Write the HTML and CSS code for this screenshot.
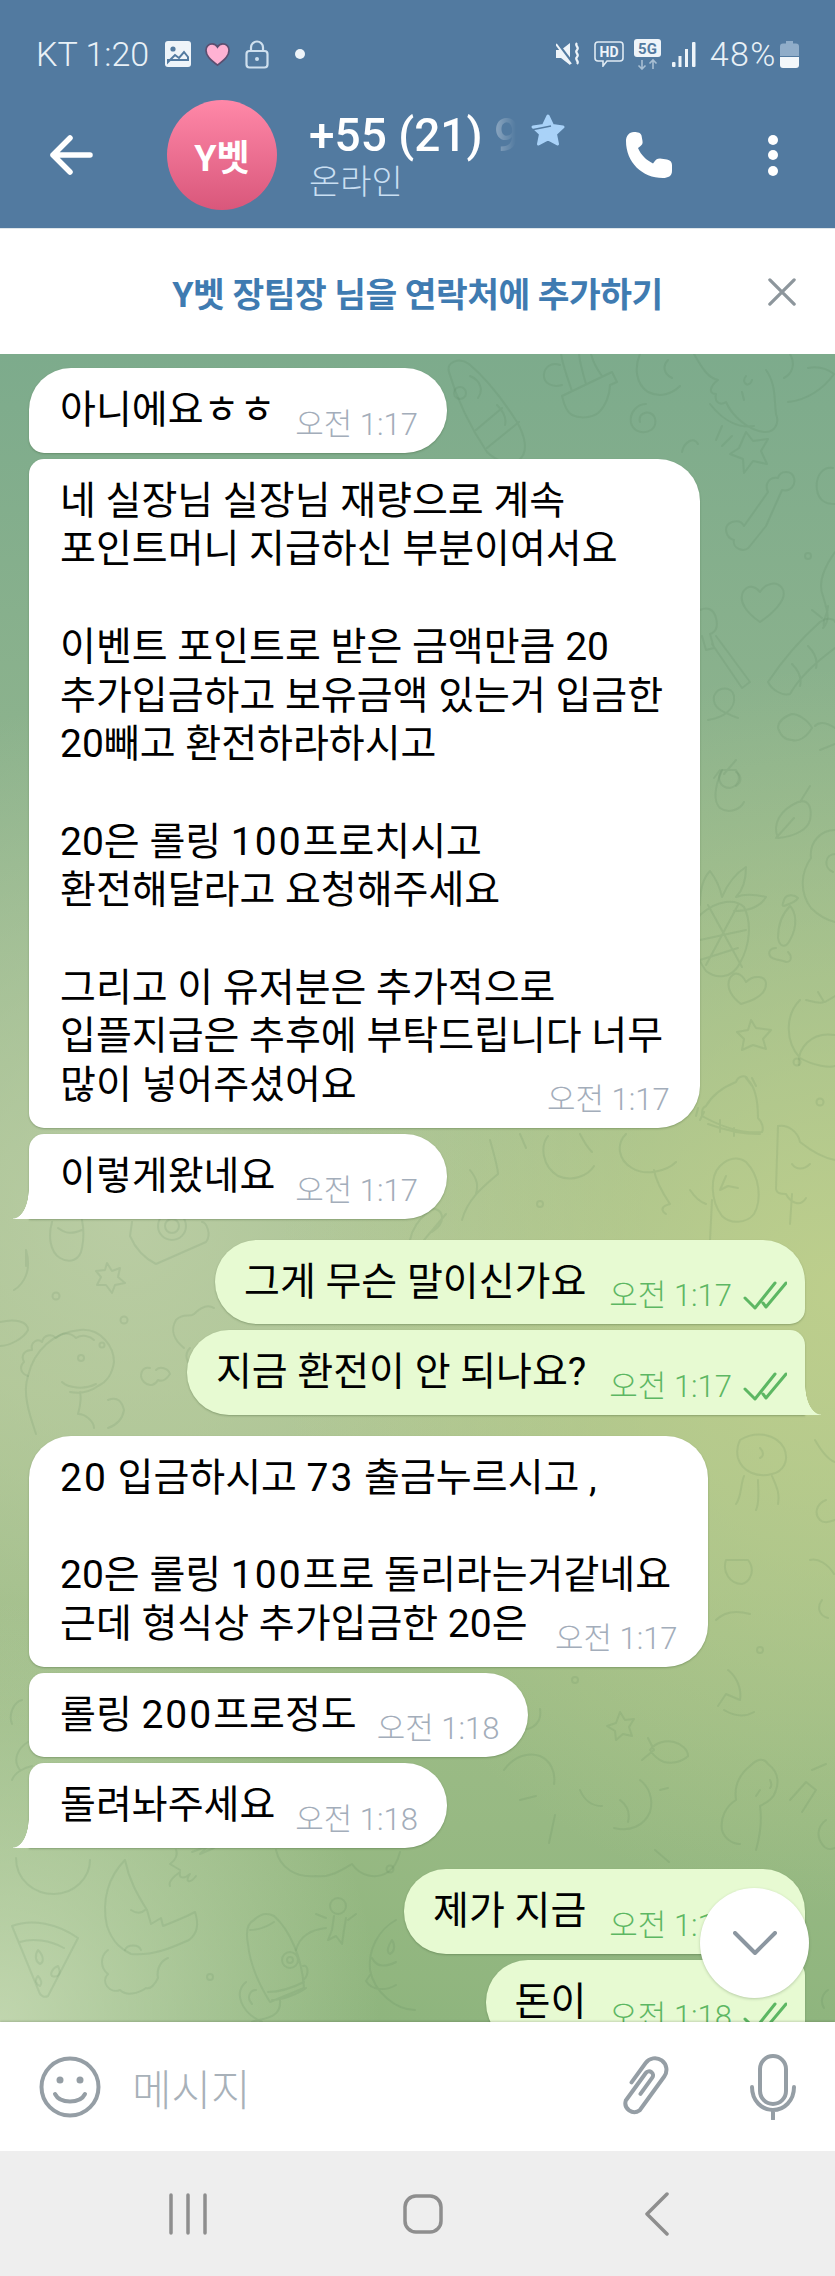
FILE: index.html
```html
<!DOCTYPE html>
<html lang="ko">

<head>
    <meta charset="UTF-8">
    <title>Chat</title>
    <link rel="stylesheet" href="styles.css">
</head>

<body>
    <div class="phone">

        <header class="topbar">
            <div class="status">
                <div class="status-side">
                    <span class="clock">KT 1:20</span>
                    <svg class="st-img" viewBox="0 0 26 26"><rect x="0" y="0" width="26" height="26" rx="3" fill="#eef4f9"/><circle cx="8" cy="8" r="2.6" fill="#527aa0"/><path d="M3 21l7-7 4 3 5-6 4 5v3H3z" fill="none" stroke="#527aa0" stroke-width="2"/></svg>
                    <svg class="st-heart" viewBox="0 0 28 26"><path d="M14 24C6 18 2 14 2 8.500 2 4.500 5 2 8.500 2c2.500 0 4.300 1.200 5.500 3.200C15.200 3.200 17 2 19.500 2 23 2 26 4.500 26 8.500 26 14 22 18 14 24z" fill="#ffb2d3" stroke="#5b4f70" stroke-width="1.800"/></svg>
                    <svg class="st-lock" viewBox="0 0 24 29"><rect x="1.500" y="11" width="21" height="16.500" rx="3" fill="none" stroke="#cfe0ee" stroke-width="2.200"/><path d="M6 11V7.500a6 6 0 0 1 12 0V11" fill="none" stroke="#cfe0ee" stroke-width="2.200"/><circle cx="12" cy="19" r="2" fill="#cfe0ee"/></svg>
                    <span class="st-dot"></span>
                </div>
                <div class="status-side right">
                    <svg class="st-mute" viewBox="0 0 26 24"><path d="M0 8h5l9-7v22l-9-7H0z" fill="#eef4f9"/><path d="M1 1l16 21" stroke="#527aa0" stroke-width="3"/><path d="M0 2l15 20" stroke="#eef4f9" stroke-width="2"/><path d="M21 1c-3 3 3 4 0 7s3 4 0 7 3 4 0 7" fill="none" stroke="#eef4f9" stroke-width="2.200"/></svg>
                    <svg class="st-hd" viewBox="0 0 30 26"><path d="M4 1h22a3 3 0 0 1 3 3v13a3 3 0 0 1-3 3H13l-4 5v-5H4a3 3 0 0 1-3-3V4a3 3 0 0 1 3-3z" fill="none" stroke="#dfeaf3" stroke-width="1.600"/><text x="15" y="16" class="st-hd-text">HD</text></svg>
                    <svg class="st-5g" viewBox="0 0 27 31"><rect x="0" y="0" width="27" height="18" rx="3" fill="#eef4f9"/><text x="13.500" y="15" class="st-5g-text">5G</text><path d="M8 21v9M4.500 26.500L8 30l3.500-3.500" fill="none" stroke="#a8bfd3" stroke-width="1.600"/><path d="M19 30v-9M15.500 24.500L19 21l3.500 3.500" fill="none" stroke="#a8bfd3" stroke-width="1.600"/></svg>
                    <svg class="st-signal" viewBox="0 0 24 25"><rect x="0" y="20" width="3.500" height="5" rx="1" fill="#eef4f9"/><rect x="6.500" y="14" width="3" height="11" fill="#eef4f9"/><rect x="13" y="7" width="3" height="18" fill="#eef4f9"/><rect x="20" y="0" width="3.500" height="25" rx="1" fill="#eef4f9"/></svg>
                    <span class="battery-text">48%</span>
                    <svg class="st-battery" viewBox="0 0 19 27"><path d="M6 0h7v2.500h3a3 3 0 0 1 3 3V15H0V5.500a3 3 0 0 1 3-3h3z" fill="#90adc9"/><path d="M0 16h19v8a3 3 0 0 1-3 3H3a3 3 0 0 1-3-3z" fill="#f3f7fa"/></svg>
                </div>
            </div>
            <div class="toolbar">
                <svg class="back" viewBox="0 0 44 42"><path d="M4 21h37M21 4L4 21l17 17" fill="none" stroke="#fff" stroke-width="5.500" stroke-linecap="round" stroke-linejoin="round"/></svg>
                <div class="avatar">Y벳</div>
                <div class="peer">
                    <div class="peer-name">
                        <span class="peer-number">+55 (21) 9</span>
                        <svg class="peer-star" viewBox="0 0 36 34"><path d="M18 3l4.500 9.500 10.500 1.500-7.500 7 2 10L18 26l-9.500 5 2-10L3 14l10.500-1.500z" fill="#a9d2f8" stroke="#a9d2f8" stroke-width="3" stroke-linejoin="round"/><path d="M1 17l20-4" stroke="#527aa0" stroke-width="1.500"/></svg>
                    </div>
                    <div class="peer-state">온라인</div>
                </div>
                <svg class="call" viewBox="0 0 48 48"><path d="M9 1C4 1 1 5 1 10c0 21 16 37 37 37 5 0 9-2 9-7v-6c0-3-2-5-5-5.500l-7-1c-3 0-4 1-5.500 3l-1.500 2C21 29 16 24 13 17l2-1.500c2-1.500 3-3 2.500-5.500l-1-5.500C16 2 13 1 9 1z" fill="#fff"/></svg>
                <div class="kebab"><span></span><span></span><span></span></div>
            </div>
        </header>

        <div class="add-contact">
            <span class="add-contact-text">Y벳 장팀장 님을 연락처에 추가하기</span>
            <svg class="add-contact-close" viewBox="0 0 30 30"><path d="M2 2l26 26M28 2L2 28" stroke="#8d969c" stroke-width="3.500" stroke-linecap="round"/></svg>
        </div>

        <main class="chat">
            <svg class="doodles" viewBox="0 354 835 1668">
                <!-- top right -->
                <path d="M449 372c-3-10 10-15 20-8 18 15 34 36 48 58 8 14 12 30 2 38-10 6-24 0-32-8-16-24-30-52-38-80zM487 448l32-26M476 430l26-22M470 376c10 4 14 14 8 22M497 405c6 6 10 12 8 20"/>
                <circle cx="460" cy="393" r="6"/>
                <path d="M562 396l50-24 5 10-7 3c0 10-5 22-12 28-8 6-20 5-26 2-4-2-7-6-10-19zM572 391c-5-14-10-28-11-38M602 376c-6-8-10-16-12-26M586 384c-3-10-6-20-7-30M560 365c-9-3-15 2-16 9-1 9 8 14 18 11"/>
                <path d="M640 422c-2-7 5-11 10-9 7 3 7 13 1 17-8 5-18 1-20-7-2-10 6-19 15-19"/>
                <path d="M640 354c-6 14-4 30 8 38 12 6 24 2 32-6M672 378c-8-4-10-12-4-18M694 354c8 14 14 24 24 26-8 6-10 14-2 14-2 8 4 12 10 8 6 14 24 30 40 30 8 0 14-8 10-18-2-16 0-30-10-44M710 404c14 18 30 24 44 22M742 392l2 8M746 376c-6 8 4 12 6 4M790 354c6 10 2 20-6 24M788 402c20-2 36-14 46-28-8-6-16-8-26-6"/>
                <path d="M739 448l7-16 7 9 15-2-7 12 6 13-14-3-9 12-1-14-13-5z"/>
                <path d="M682 452c2-10 12-16 16-8M716 440l6-14M722 446l10-10"/>
                <path d="M766 526l-16 20c-6 8-18 2-16-6-8-2-12-14-2-18 6-2 10 0 12 4l24-34c-4-8 2-16 10-14 2-8 14-8 16 0 2 8-4 14-12 12z"/>
                <path d="M833 468c-10-2-18 8-16 22 2 12 10 14 18 14"/>
                <circle cx="808" cy="556" r="3"/>
                <path d="M760 622c-12-8-22-20-17-30 5-8 12-6 17 0 5-8 16-12 22-4 6 8-4 22-22 34z"/>
                <path d="M835 552c-10 14-18 30-12 44 4 14 8 24 0 32M828 606c0 10-6 12-4 20M812 610l10 8"/>
                <path d="M700 610c8-4 14 0 16 8s0 14-6 16l4 14-8 2-4-14M716 636l34 46-8 6-30-44"/>
                <path d="M768 682c16-24 34-44 52-60 8-6 15-2 15 0M768 682c4 8 14 14 22 12 10-18 26-32 45-46M792 664c6 6 10 14 8 22M808 646c6 6 10 14 8 22"/>
                <path d="M708 720c14-2 28-10 26-24-2-10-16-10-20 0-2 12 8 16 24 22"/>
                <path d="M778 728c0-8 8-12 14-14 6 0 16 6 20 14-6 10-14 14-20 12-8 0-12-6-14-12zM815 726c6-6 14-2 20 2M820 750l15-6"/>
                <path d="M722 770c-6 8-2 18 8 18 8-2 12-10 6-18zM736 760l-12 14"/>
                <!-- right column -->
                <path d="M722 770c-6 14-10 30-2 38 8 6 20 2 24-6M720 770l-6 8M736 786c6-4 6-10 0-14"/>
                <path d="M778 838c-6-14 2-28 20-36 12-4 14 8 12 18-2 8-12 16-32 18zM776 838l18-20M800 802l10-16"/>
                <path d="M700 915c-10 16-6 40 6 56 10 8 26 8 34-8 10-18 12-40 4-56-8-8-26-8-44 8zM700 905c0-14 2-26 10-34 6 8 10 16 12 26 6-14 14-24 24-30 0 10-2 22-10 30 10-4 22-2 30 0-6 10-18 14-32 14M700 940l46-10M708 905l34 62M738 905l-32 60M700 960l38-12"/>
                <path d="M784 906c6-2 12-4 14-8-4-4-12-4-14 2s-2 6 0 6zM778 938c0-14 4-24 12-32 6 6 8 20 0 34-4 8-10 8-12-2zM776 948c-6 0-8 4-6 8s12 4 16 6c6 0 6-6 2-10"/>
                <path d="M741 1004c-8-6-16-16-11-26 5-8 12-4 16 4 8-8 20-6 20 2 0 10-10 16-25 20z"/>
                <path d="M751 1020l5 8 15 2-8 9 3 10-13-4-11 5 2-11-7-7 11-2z"/>
                <circle cx="797" cy="1062" r="3.500"/>
                <circle cx="820" cy="1102" r="3.500"/>
                <path d="M835 1035c-24-4-38 14-36 30M800 1000c-14 14-16 40 0 58 14 8 30 10 35 8M806 1000c8 2 14 4 18 2l-6-10M835 996l-10 6"/>
                <path d="M835 830c-14 0-26 12-24 28-10 14-12 34 0 50 8 8 16 12 24 14M835 854c-10 0-12 14-2 18"/>
                <path d="M706 1106c8-14 20-20 30-24 2-6 10-8 12-2 8 8 10 22 10 38 4 4 6 10 4 14-20 2-42-6-60-16 0-6 0-8 4-10zM708 1124c16 6 34 10 52 10M720 1120l0 12M734 1128l0 8M752 1086l-6-8M756 1086l-4-8M704 1112l-4 8M698 1108l-2 8"/>
                <path d="M720 1166c-10 10-10 34 2 50 8 8 24 8 32-2 8-14 6-38-8-52-8-6-18-4-26 4zM726 1176l-6 14 8-4 10 2"/>
                <path d="M778 1126l-2 62c0 6 6 6 10 6 4 8 14 14 20 4M778 1126c10-2 20 6 22 16 10 8 24 16 35 18M792 1164c4 6 12 6 18 0M792 1194l-2 30"/>
                <!-- middle gap -->
                <path d="M490 1140c4 14 8 30 8 34-14 12-30 24-36 46M520 1134l6 14M470 1170c8 10 8 16 6 24M548 1136c-8 10-6 30 10 40 14 6 30 0 36-10M580 1134c4 8 8 14 12 18M626 1134c-10 10-8 26 6 34 12 8 34 4 44-6M654 1170c2 12 8 22 16 34-8 2-10 6-4 10M710 1240l2-40M690 1190c4 6 10 12 16 14"/>
                <circle cx="540" cy="1204" r="3"/>
                <path d="M424 1240l22-26M410 1240c2-10 8-20 18-28 6-6 14-2 14 6 0 6-4 10-10 14"/>
                <!-- left middle -->
                <path d="M52 1222c-4 14-2 30 8 36 10 6 20 2 22-10 2-10 2-18 0-28M58 1228c8 6 14 6 24 2M14 1290c10-6 18-20 12-40M26 1250v16"/>
                <path d="M132 1222l-2 14c6 14 14 22 26 28l50-22c6-8 0-20-4-20"/>
                <circle cx="172" cy="1226" r="14"/>
                <circle cx="172" cy="1226" r="7"/>
                <path d="M107 1263l5 8 8-3-2 9 7 6-10 2-3 8-6-8-9 0 4-8-5-6 9-1z"/>
                <circle cx="56" cy="1296" r="3.500"/>
                <circle cx="124" cy="1320" r="3.500"/>
                <path d="M0 1346c10 0 24-8 28-16 0-8-12-12-28-8"/>
                <path d="M36 1434c-6-18-14-40-8-58 6-26 26-44 52-46 22-2 34 18 34 32-2 14-8 20-16 24-8 6-16 8-28 6M62 1382c6 6 22 8 34 2M80 1392c2 8 0 14-2 22 8 0 16 8 16 14M108 1400c10-4 14 2 16 10-2 12-10 16-16 18"/>
                <path d="M28 1376c-6-2-10-8-4-14-4-8 2-12 8-12-2-8 6-12 10-8 2-8 10-8 14-4 6-6 14-6 20 0 6-4 14-2 18 2"/>
                <circle cx="102" cy="1345" r="2.500"/>
                <circle cx="81" cy="1358" r="3"/>
                <path d="M184 1348c-10-8-14-18-8-28 8-8 14-2 18-6 8-8 14-10 20-6M190 1348c-6 6-4 16 4 18 6-2 10 0 14-2M150 1368c-8-2-12 8-6 14 6 6 12 2 14-2 4 2 8 0 12-6-2-6-10-8-14-4"/>
                <!-- bottom left -->
                <path d="M20 1770c-8-10-2-22 8-28M22 1700c-8 2-14 14-10 24M12 1780c2-6 10-12 20-14"/>
                <path d="M16 1858c0 22 18 36 38 36 20 0 36-16 36-34M276 1850c4 18 20 28 40 26 14 2 26-6 36-12 8 12 24 16 36 8 6-4 10-12 12-20"/>
                <circle cx="390" cy="1869" r="3.500"/>
                <path d="M125 1860c-16 16-24 40-18 66 6 18 16 24 24 28 22 2 40-6 58-14 8-6 10-16 6-28l-8 4-14 6-10 4-2-8-10 6-4-14c-10-16-18-30-22-50zM131 1910c6 4 10 4 14 0M176 1850c2 4 0 10-6 14l10 6M170 1886c-2-4 4-10 10-14-2 8 6 6 10 2-6 8 0 10 6 2M192 1852l16-6-8 8 14-6"/>
                <path d="M108 1950c-8 6-8 18 0 24-8 8 2 20 12 16 6 6 18 4 26-2 6 2 10-6 12-10-2-10 4-18 10-20M125 1950c2-6 14-6 16 0"/>
                <path d="M12 1926c20-8 46-2 66 12l-30 58c-4 2-6 0-8-2zM20 1942c12-4 30-2 44 6"/>
                <path d="M38 1950c-4 6-2 12 2 14 4-2 4-8-2-14zM58 1966c-6 2-8 8-6 10 6 2 10-2 6-10zM38 1976c-4 4-2 8 2 10 2-2 2-6-2-10z"/>
                <circle cx="210" cy="1977" r="3"/>
                <path d="M254 1920c-8 4-8 14-6 24 2 22 12 42 22 58l34-14c-2-30-14-58-30-72-8-4-14-2-20 4zM250 1930c10 0 18-4 24-8M268 1992c10 0 24-4 36-10M272 2000c10 0 26-6 34-12M282 1960a8 8 0 1 0 16 0a8 8 0 1 0-16 0M287 1960a3 3 0 1 0 6 0a3 3 0 1 0-6 0M303 1966c6-2 6 10 0 14M262 2022c-22-10-28-30-16-40M252 2004c-6-6-2-14 4-14M252 2022c8-4 30-2 28-22"/>
                <path d="M296 1950c4-14 14-20 30-22M330 1906a8 8 0 1 0 16 0 8 8 0 1 0-16 0M334 1916l-2 14-4 10 8-4 6 8 2-14 2-12M326 1918l-10-4M348 1920l8-6"/>
                <path d="M396 1920c-18 10-28 30-26 50 4 22 26 40 45 40M392 1940c-4 6-6 12-2 14 4-2 6-8 2-14M372 1958c4 8 12 10 24 4M370 1975l-4 6c6 10 20 10 30 4"/>
                <!-- right bottom -->
                <path d="M740 1440c16-10 36-6 44 8 6 14-2 24-12 26-14 4-30-2-34-16-2-8 0-14 2-18zM744 1476c-4 10-2 20-8 28M758 1480c0 10 2 22-2 30M772 1476c4 10 8 16 6 28M760 1448c4 4 4 8 0 10"/>
                <path d="M815 1440c8 14 14 20 20 22M826 1500c-10 4-12 14-6 20 4 4 10 2 15 0"/>
                <path d="M726 1560c-4 12 4 24 16 24 8-2 14-14 6-24zM716 1620c8-8 20-10 34-6M810 1560c8-2 18 4 24 14M822 1600c-6 8-2 16 6 18"/>
                <circle cx="760" cy="1650" r="3"/>
                <path d="M728 1670c8 6 14 18 12 30l-14-6-8 12M724 1710c10 6 20 8 30 2"/>
                <path d="M736 1800c-2-14 4-26 14-34 8-8 14-8 18-2 8 6 12 14 8 26-2 8-8 12-16 16 2 14 0 30-4 44M760 1790l-4 6M770 1780c2 4 2 6 0 8M736 1800c-10 6-16 18-14 30 2 8 10 14 18 14M790 1800l16-18 10 8-14 22"/>
                <path d="M812 1770l14-6M826 1820c-8 6-10 16-4 24 4 6 8 6 13 4M828 1990c-6 4-8 12-4 18"/>
                <path d="M650 1750c6-8 16-10 24-8 8 2 14 8 14 14-6 6-16 8-24 6-6-2-10-6-14-12zM648 1738l6 12-12 10"/>
                <path d="M620 1712l5 8 9-1-5 8 3 9-9-2-7 6-1-9-8-5 9-3z"/>
                <path d="M510 1695c-8 14-4 28 10 34 14 2 22-8 20-20M504 1770c10-14 24-18 36-14 10 4 16 16 14 28M520 1800l16-4M580 1790c4 10 12 16 22 16M555 1815l-6 28M620 1800c8 6 10 14 8 22"/>
                <circle cx="575" cy="1680" r="3"/>
                <path d="M640 1780c8 6 14 18 10 32-6 14-20 20-36 16M655 1850l14 12M660 1790l8-2"/>
            </svg>

            <div class="bubble in first">
                <p class="text">아니에요ㅎㅎ</p>
                <span class="time">오전 1:17</span>
            </div>
            <div class="bubble in long">
                <p class="text">네 실장님 실장님 재량으로 계속<br>포인트머니 지급하신 부분이여서요<br><br>이벤트 포인트로 받은 금액만큼 20<br>추가입금하고 보유금액 있는거 입금한<br>20빼고 환전하라하시고<br><br>20은 롤링 <span class="num">100</span>프로치시고<br>환전해달라고 요청해주세요<br><br>그리고 이 유저분은 추가적으로<br>입플지급은 추후에 부탁드립니다 너무<br>많이 넣어주셨어요</p>
                <span class="time">오전 1:17</span>
            </div>
            <div class="bubble in last">
                <p class="text">이렇게왔네요</p>
                <span class="time">오전 1:17</span>
            </div>

            <div class="bubble out first group">
                <p class="text">그게 무슨 말이신가요</p>
                <span class="time">오전 1:17</span>
                <svg class="ticks" viewBox="0 0 44 30"><path d="M2 17l10 10L32 2M20 22l3 4L43 2" fill="none" stroke="#5db763" stroke-width="3" stroke-linecap="round" stroke-linejoin="round"/></svg>
            </div>
            <div class="bubble out last">
                <p class="text">지금 환전이 안 되나요?</p>
                <span class="time">오전 1:17</span>
                <svg class="ticks" viewBox="0 0 44 30"><path d="M2 17l10 10L32 2M20 22l3 4L43 2" fill="none" stroke="#5db763" stroke-width="3" stroke-linecap="round" stroke-linejoin="round"/></svg>
            </div>

            <div class="bubble in first long group">
                <p class="text"><span class="num">20</span> 입금하시고 <span class="num">73</span> 출금누르시고 ,<br><br>20은 롤링 <span class="num">100</span>프로 돌리라는거같네요<br>근데 형식상 추가입금한 20은</p>
                <span class="time">오전 1:17</span>
            </div>
            <div class="bubble in">
                <p class="text">롤링 <span class="num">200</span>프로정도</p>
                <span class="time">오전 1:18</span>
            </div>
            <div class="bubble in last">
                <p class="text">돌려놔주세요</p>
                <span class="time">오전 1:18</span>
            </div>

            <div class="bubble out first group">
                <p class="text">제가 지금</p>
                <span class="time">오전 1:18</span>
                <svg class="ticks" viewBox="0 0 44 30"><path d="M2 17l10 10L32 2M20 22l3 4L43 2" fill="none" stroke="#5db763" stroke-width="3" stroke-linecap="round" stroke-linejoin="round"/></svg>
            </div>
            <div class="bubble out">
                <p class="text">돈이</p>
                <span class="time">오전 1:18</span>
                <svg class="ticks" viewBox="0 0 44 30"><path d="M2 17l10 10L32 2M20 22l3 4L43 2" fill="none" stroke="#5db763" stroke-width="3" stroke-linecap="round" stroke-linejoin="round"/></svg>
            </div>

            <div class="to-bottom">
                <svg viewBox="0 0 44 24"><path d="M2 2l20 20L42 2" fill="none" stroke="#8b96a0" stroke-width="4" stroke-linecap="round" stroke-linejoin="round"/></svg>
            </div>
        </main>

        <footer class="composer">
            <svg class="smile" viewBox="0 0 62 62"><circle cx="31" cy="31" r="28.500" fill="none" stroke="#959ea5" stroke-width="4"/><circle cx="21" cy="24" r="3.500" fill="#959ea5"/><circle cx="41" cy="24" r="3.500" fill="#959ea5"/><path d="M16 38c5 10 25 10 30 0" fill="none" stroke="#959ea5" stroke-width="4" stroke-linecap="round"/></svg>
            <span class="placeholder">메시지</span>
            <svg class="clip" viewBox="0 0 52 62"><g transform="rotate(36 26 31)"><path d="M14 34V10a11 11 0 0 1 23 0v42a9 9 0 0 1-17 0V18a3.500 3.500 0 0 1 8 0v20" fill="none" stroke="#959ea5" stroke-width="4" stroke-linecap="round"/></g></svg>
            <svg class="mic" viewBox="0 0 46 66"><rect x="10" y="2" width="26" height="48" rx="13" fill="none" stroke="#959ea5" stroke-width="4"/><path d="M2 33c0 14 10 23 21 23s21-9 21-23M23 56v9" fill="none" stroke="#959ea5" stroke-width="4" stroke-linecap="round"/></svg>
        </footer>

        <nav class="navbar">
            <svg class="nav-recent" viewBox="0 0 38 42"><path d="M2 2v38M19 2v38M36 2v38" stroke="#8e8e8e" stroke-width="3.500" stroke-linecap="round"/></svg>
            <svg class="nav-home" viewBox="0 0 40 40"><rect x="2" y="2" width="36" height="36" rx="11" fill="none" stroke="#8e8e8e" stroke-width="3.500"/></svg>
            <svg class="nav-back" viewBox="0 0 24 44"><path d="M22 2L2 22l20 20" fill="none" stroke="#8e8e8e" stroke-width="3.500" stroke-linecap="round" stroke-linejoin="round"/></svg>
        </nav>

    </div>
</body>

</html>
```

FILE: styles.css
```css
html,
body {
    margin: 0;
    padding: 0;
    background: #eee;
}

.phone {
    width: 835px;
    height: 2276px;
    display: flex;
    flex-direction: column;
    overflow: hidden;
    font-family: Roboto, 'Noto Sans CJK KR', sans-serif;
}

/* Top bar */

.topbar {
    height: 228px;
    flex: none;
    background: #527aa0;
    box-sizing: border-box;
    padding-top: 34px;
}

.status {
    height: 40px;
    display: flex;
    justify-content: space-between;
    align-items: center;
    padding: 0 36px;
    color: #e9f1f7;
}

.status-side {
    display: flex;
    align-items: center;
}

.clock,
.battery-text {
    font-size: 34px;
    line-height: 40px;
    font-weight: 300;
}

.st-img {
    width: 26px;
    height: 26px;
    margin-left: 16px;
}

.st-heart {
    width: 27px;
    height: 25px;
    margin-left: 13px;
}

.st-lock {
    width: 24px;
    height: 29px;
    margin-left: 14px;
}

.st-dot {
    width: 10px;
    height: 10px;
    border-radius: 50%;
    background: #eef4f9;
    margin-left: 26px;
}

.st-mute {
    width: 26px;
    height: 24px;
}

.st-hd {
    width: 30px;
    height: 26px;
    margin-left: 12px;
}

.st-hd-text {
    font-size: 14px;
    font-weight: 700;
    text-anchor: middle;
    fill: #eef4f9;
}

.st-5g {
    width: 27px;
    height: 31px;
    margin-left: 10px;
}

.st-5g-text {
    font-size: 15px;
    font-weight: 700;
    text-anchor: middle;
    fill: #527aa0;
}

.st-signal {
    width: 24px;
    height: 25px;
    margin-left: 11px;
}

.battery-text {
    margin-left: 14px;
    letter-spacing: 1.500px;
}

.st-battery {
    width: 19px;
    height: 27px;
    margin-left: 3px;
}

.toolbar {
    display: flex;
    align-items: center;
    height: 110px;
    margin-top: 26px;
    padding-left: 49px;
}

.back {
    width: 44px;
    height: 42px;
}

.avatar {
    width: 110px;
    height: 110px;
    margin-left: 74px;
    border-radius: 50%;
    background: linear-gradient(#ff88a8, #d9577b);
    color: #fff;
    font-size: 36px;
    font-weight: 700;
    display: flex;
    align-items: center;
    justify-content: center;
}

.peer {
    margin-left: 32px;
    width: 280px;
}

.peer-name {
    display: flex;
    align-items: center;
    height: 54px;
}

.peer-number {
    width: 207px;
    overflow: hidden;
    white-space: nowrap;
    color: #fff;
    font-size: 46px;
    line-height: 54px;
    font-weight: 500;
    -webkit-mask-image: linear-gradient(to right, #000 85%, rgba(0, 0, 0, 0.4) 88%, transparent 100%);
    mask-image: linear-gradient(to right, #000 85%, rgba(0, 0, 0, 0.4) 88%, transparent 100%);
}

.peer-star {
    width: 36px;
    height: 34px;
    margin-left: 14px;
    margin-top: -10px;
}

.peer-state {
    color: #c9dff2;
    font-size: 34px;
    line-height: 40px;
    font-weight: 300;
}

.call {
    width: 48px;
    height: 48px;
    margin-left: 36px;
}

.kebab {
    display: flex;
    flex-direction: column;
    gap: 5.500px;
    margin-left: 95px;
}

.kebab span {
    width: 10px;
    height: 10px;
    border-radius: 50%;
    background: #fff;
}

/* Add contact banner */

.add-contact {
    height: 126px;
    flex: none;
    position: relative;
    display: flex;
    align-items: center;
    justify-content: center;
    background: #fff;
    box-sizing: border-box;
    border-top: 1px solid #dfe6ea;
}

.add-contact-text {
    color: #3f7bb1;
    font-size: 34.500px;
    font-weight: 700;
    letter-spacing: -0.500px;
}

.add-contact-close {
    position: absolute;
    right: 38px;
    top: 49px;
    width: 30px;
    height: 28px;
}

/* Chat */

.chat {
    height: 1668px;
    flex: none;
    position: relative;
    overflow: hidden;
    display: flex;
    flex-direction: column;
    align-items: flex-start;
    box-sizing: border-box;
    padding: 14px 30px 0 29px;
    background:
        radial-gradient(ellipse 380px 420px at 0 100%, rgba(205, 222, 186, 0.8), transparent),
        radial-gradient(ellipse 560px 620px at 100% 56%, rgba(190, 207, 140, 0.95), transparent),
        radial-gradient(ellipse 520px 520px at 15% 52%, rgba(188, 206, 165, 0.9), transparent),
        linear-gradient(#7dab8c 0, #8fb48d 28%, #a9c28e 62%, #8fb57e 100%);
}

.doodles {
    position: absolute;
    left: 0;
    top: 0;
    width: 835px;
    height: 1668px;
    fill: none;
    stroke: #3f6d45;
    stroke-opacity: 0.11;
    stroke-width: 2;
    stroke-linecap: round;
    stroke-linejoin: round;
}

.bubble {
    position: relative;
    display: flex;
    align-items: flex-end;
    flex: none;
    margin-top: 6px;
    padding: 18px 29px 18px 31px;
    background: #fff;
    border-radius: 15px 42px 42px 15px;
    box-shadow: 0 1px 2px rgba(40, 70, 30, 0.3);
    color: #000;
}

.bubble:first-of-type {
    margin-top: 0;
}

.bubble.first {
    border-top-left-radius: 42px;
}

.bubble.group {
    margin-top: 21px;
}

.bubble.last {
    border-bottom-left-radius: 0;
}

.bubble.last::after {
    content: '';
    position: absolute;
    left: -16px;
    bottom: 0;
    width: 16px;
    height: 30px;
    background: radial-gradient(ellipse 16px 30px at 0 0, transparent 97%, #fff 100%);
}

.bubble.long {
    flex-direction: column;
    padding-right: 37px;
}

.bubble.long .time {
    align-self: flex-end;
    margin-top: -25px;
    margin-right: -6.500px;
}

.text {
    margin: 0;
    font-size: 39px;
    line-height: 48.700px;
    white-space: nowrap;
}

.num {
    letter-spacing: 2px;
}

.time {
    flex: none;
    height: 30px;
    margin-left: 20px;
    margin-bottom: -5px;
    color: #a3adba;
    font-size: 31px;
    line-height: 30px;
    font-weight: 300;
    white-space: nowrap;
}

.bubble.out {
    align-self: flex-end;
    background: #e7fad2;
    padding: 18px 18px 18px 29px;
    border-radius: 42px 15px 15px 42px;
}

.bubble.out .time {
    color: #5db763;
    margin-left: 23px;
}

.bubble.out.first {
    border-top-left-radius: 42px;
    border-top-right-radius: 42px;
}

.bubble.out.last {
    border-bottom-left-radius: 42px;
    border-bottom-right-radius: 0;
}

.bubble.out.last::after {
    left: auto;
    right: -16px;
    background: radial-gradient(ellipse 16px 30px at 100% 0, transparent 97%, #e7fad2 100%);
}

.ticks {
    flex: none;
    width: 44px;
    height: 30px;
    margin-left: 11px;
    margin-bottom: -5px;
}

.to-bottom {
    position: absolute;
    left: 700px;
    top: 1534px;
    width: 109px;
    height: 110px;
    border-radius: 50%;
    background: #fff;
    box-shadow: 0 1px 3px rgba(40, 70, 30, 0.25);
    display: flex;
    align-items: center;
    justify-content: center;
}

.to-bottom svg {
    width: 44px;
    height: 24px;
}

/* Composer */

.composer {
    height: 129px;
    flex: none;
    position: relative;
    display: flex;
    align-items: center;
    background: #fff;
    box-shadow: 0 -1px 2px rgba(0, 0, 0, 0.15);
    box-sizing: border-box;
    padding-left: 39px;
    padding-right: 39px;
}

.smile {
    width: 62px;
    height: 62px;
}

.placeholder {
    margin-left: 31px;
    flex: 1;
    color: #a8b1b9;
    font-size: 43px;
    font-weight: 300;
}

.clip {
    width: 52px;
    height: 62px;
}

.mic {
    width: 46px;
    height: 66px;
    margin-left: 81px;
}

/* Nav bar */

.navbar {
    height: 125px;
    flex: none;
    position: relative;
    background: #eee;
    display: flex;
    align-items: center;
    padding-left: 169px;
}

.nav-recent {
    width: 38px;
    height: 42px;
}

.nav-home {
    width: 40px;
    height: 40px;
    margin-left: 196px;
}

.nav-back {
    width: 24px;
    height: 44px;
    margin-left: 202px;
}
```
